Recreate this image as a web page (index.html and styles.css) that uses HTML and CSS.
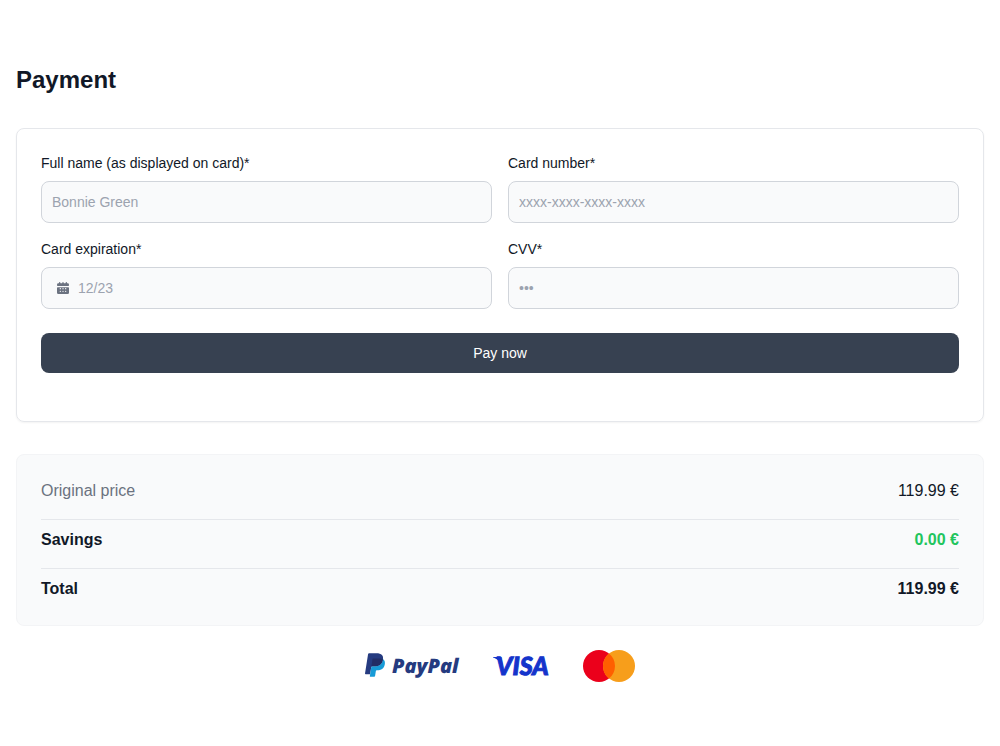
FILE: index.html
```html
<!DOCTYPE html>
<html lang="en">
<head>
  <meta charset="utf-8">
  <meta name="viewport" content="width=device-width, initial-scale=1">
  <title>Payment</title>
  <link rel="stylesheet" href="styles.css">
</head>
<body>
  <main class="payment">
    <h1 class="payment-title">Payment</h1>

    <form class="card-form">
      <div class="fields">
        <div class="field">
          <label class="field-label" for="full-name">Full name (as displayed on card)*</label>
          <input class="field-input" id="full-name" type="text" placeholder="Bonnie Green" required>
        </div>
        <div class="field">
          <label class="field-label" for="card-number">Card number*</label>
          <input class="field-input" id="card-number" type="text" placeholder="xxxx-xxxx-xxxx-xxxx" required>
        </div>
        <div class="field">
          <label class="field-label" for="card-expiration">Card expiration*</label>
          <div class="input-wrap">
            <svg class="input-icon" viewBox="0 0 24 24" fill="currentColor" aria-hidden="true">
              <path fill-rule="evenodd" d="M5 5a1 1 0 0 0 1-1 1 1 0 1 1 2 0 1 1 0 0 0 1 1h1a1 1 0 0 0 1-1 1 1 0 1 1 2 0 1 1 0 0 0 1 1h1a1 1 0 0 0 1-1 1 1 0 1 1 2 0 1 1 0 0 0 1 1 2 2 0 0 1 2 2v1a1 1 0 0 1-1 1H4a1 1 0 0 1-1-1V7a2 2 0 0 1 2-2ZM3 19v-7a1 1 0 0 1 1-1h16a1 1 0 0 1 1 1v7a2 2 0 0 1-2 2H5a2 2 0 0 1-2-2Zm6.01-6a1 1 0 1 0-2 0 1 1 0 0 0 2 0Zm2 0a1 1 0 1 1 2 0 1 1 0 0 1-2 0Zm6 0a1 1 0 1 0-2 0 1 1 0 0 0 2 0Zm-10 4a1 1 0 1 1 2 0 1 1 0 0 1-2 0Zm6 0a1 1 0 1 0-2 0 1 1 0 0 0 2 0Zm2 0a1 1 0 1 1 2 0 1 1 0 0 1-2 0Z"/>
            </svg>
            <input class="field-input field-input-icon" id="card-expiration" type="text" placeholder="12/23" required>
          </div>
        </div>
        <div class="field">
          <label class="field-label" for="cvv">CVV*</label>
          <input class="field-input" id="cvv" type="text" placeholder="•••" required>
        </div>
      </div>
      <button class="pay-button" type="submit">Pay now</button>
    </form>

    <dl class="summary">
      <div class="summary-row">
        <dt class="summary-muted">Original price</dt>
        <dd>119.99 €</dd>
      </div>
      <div class="summary-row summary-strong">
        <dt>Savings</dt>
        <dd class="summary-savings">0.00 €</dd>
      </div>
      <div class="summary-row summary-strong">
        <dt>Total</dt>
        <dd>119.99 €</dd>
      </div>
    </dl>

    <div class="brands">
      <svg class="brand brand-paypal" viewBox="0 0 96 32" role="img" aria-label="PayPal">
        <svg x="0" y="3" width="20" height="24" viewBox="0 0 256 302">
          <path fill="#253b80" d="M217.168 23.507C203.234 7.625 178.046.816 145.823.816h-93.52A13.39 13.39 0 0 0 39.076 12.11L.136 259.077c-.774 4.87 2.997 9.28 7.933 9.28h57.736l14.5-91.971-.45 2.88c1.033-6.501 6.593-11.296 13.177-11.296h27.436c53.898 0 96.101-21.892 108.429-85.221.366-1.873.683-3.696.957-5.477 3.671-23.407-.025-39.34-12.686-53.765"/>
          <path fill="#179bd7" d="M228.897 82.749c-12.328 63.32-54.53 85.221-108.429 85.221H93.024c-6.584 0-12.145 4.795-13.168 11.296L61.817 293.621c-.674 4.262 2.622 8.124 6.934 8.124h48.67a11.71 11.71 0 0 0 11.563-9.88l.474-2.48 9.173-58.136.591-3.213a11.71 11.71 0 0 1 11.562-9.88h7.284c47.147 0 84.064-19.154 94.852-74.55 4.503-23.15 2.173-42.478-9.739-56.054-3.613-4.112-8.1-7.508-13.327-10.28-.283 1.79-.59 3.604-.957 5.477z"/>
          <path fill="#222d65" d="M216.952 72.128a89.928 89.928 0 0 0-5.818-1.49 109.904 109.904 0 0 0-6.177-1.174c-7.408-1.199-15.5-1.765-24.19-1.765h-73.309a11.57 11.57 0 0 0-5.053 1.149 11.683 11.683 0 0 0-6.51 8.74l-15.582 98.798-.45 2.88c1.025-6.501 6.585-11.296 13.17-11.296h27.444c53.898 0 96.1-21.892 108.428-85.221.367-1.873.675-3.688.958-5.477-3.122-1.648-6.501-3.072-10.14-4.279-.908-.3-1.832-.591-2.77-.865"/>
        </svg>
        <text class="paypal-word" x="27" y="23">PayPal</text>
      </svg>
      <svg class="brand brand-visa" viewBox="0 0 58 32" role="img" aria-label="Visa">
        <path fill="#1434cb" d="M0 7h8l2 9C7 11 4 9 0 7.500Z"/>
        <text class="visa-word" x="3" y="25">VISA</text>
      </svg>
      <svg class="brand brand-mastercard" viewBox="0 0 52 32" role="img" aria-label="Mastercard">
        <circle cx="16" cy="16" r="16" fill="#eb001b"/>
        <circle cx="36" cy="16" r="16" fill="#f79e1b"/>
        <path fill="#ff5f00" d="M26 3.510a16 16 0 0 1 0 24.980a16 16 0 0 1 0-24.980Z"/>
      </svg>
    </div>
  </main>
</body>
</html>
```

FILE: styles.css
```css
* {
  box-sizing: border-box;
}

body {
  margin: 0;
  background: #fff;
  color: #111827;
  font-family: "Liberation Sans", Arial, sans-serif;
  font-size: 16px;
  line-height: 24px;
}

.payment {
  max-width: 1024px;
  margin: 0 auto;
  padding: 64px 16px;
}

.payment-title {
  margin: 0 0 32px;
  font-size: 24px;
  line-height: 32px;
  font-weight: 700;
}

.card-form {
  margin-bottom: 32px;
  padding: 24px 24px 48px;
  border: 1px solid #e5e7eb;
  border-radius: 8px;
  box-shadow: 0 1px 2px rgba(0, 0, 0, 0.05);
}

.fields {
  display: grid;
  grid-template-columns: 1fr 1fr;
  gap: 16px;
  margin-bottom: 24px;
}

.field-label {
  display: block;
  margin-bottom: 8px;
  font-size: 14px;
  line-height: 20px;
}

.field-input {
  display: block;
  width: 100%;
  padding: 10px;
  border: 1px solid #d1d5db;
  border-radius: 8px;
  background: #f9fafb;
  color: #111827;
  font-family: inherit;
  font-size: 14px;
  line-height: 20px;
}

.field-input::placeholder {
  color: #9ca3af;
  opacity: 1;
}

.input-wrap {
  position: relative;
}

.input-icon {
  position: absolute;
  top: 13px;
  left: 14px;
  width: 16px;
  height: 16px;
  color: #6b7280;
  pointer-events: none;
}

.field-input-icon {
  padding-left: 36px;
}

.pay-button {
  display: block;
  width: 100%;
  padding: 10px 20px;
  border: 0;
  border-radius: 8px;
  background: #374151;
  color: #fff;
  font-family: inherit;
  font-size: 14px;
  line-height: 20px;
  cursor: pointer;
}

.summary {
  display: grid;
  gap: 16px;
  margin: 0 0 24px;
  padding: 24px;
  border: 1px solid #f3f4f6;
  border-radius: 8px;
  background: #f9fafb;
}

.summary-row {
  display: flex;
  justify-content: space-between;
  gap: 16px;
}

.summary-row dd {
  margin: 0;
}

.summary-muted {
  color: #6b7280;
}

.summary-strong {
  padding-top: 8px;
  border-top: 1px solid #e5e7eb;
  font-weight: 700;
}

.summary-savings {
  color: #22c55e;
}

.brands {
  display: flex;
  justify-content: center;
  gap: 32px;
}

.brand {
  display: block;
  height: 32px;
  overflow: visible;
}

.brand-paypal {
  width: 96px;
}

.brand-visa {
  width: 58px;
}

.brand-mastercard {
  width: 52px;
}

.paypal-word,
.visa-word {
  font-style: italic;
  text-rendering: geometricPrecision;
}

.paypal-word {
  fill: #253b80;
  font-family: "Open Sans", sans-serif;
  font-size: 20px;
  font-weight: 800;
}

.visa-word {
  fill: #1434cb;
  stroke: #1434cb;
  stroke-width: 1px;
  font-family: Lato, sans-serif;
  font-size: 25px;
  font-weight: 900;
}
```
